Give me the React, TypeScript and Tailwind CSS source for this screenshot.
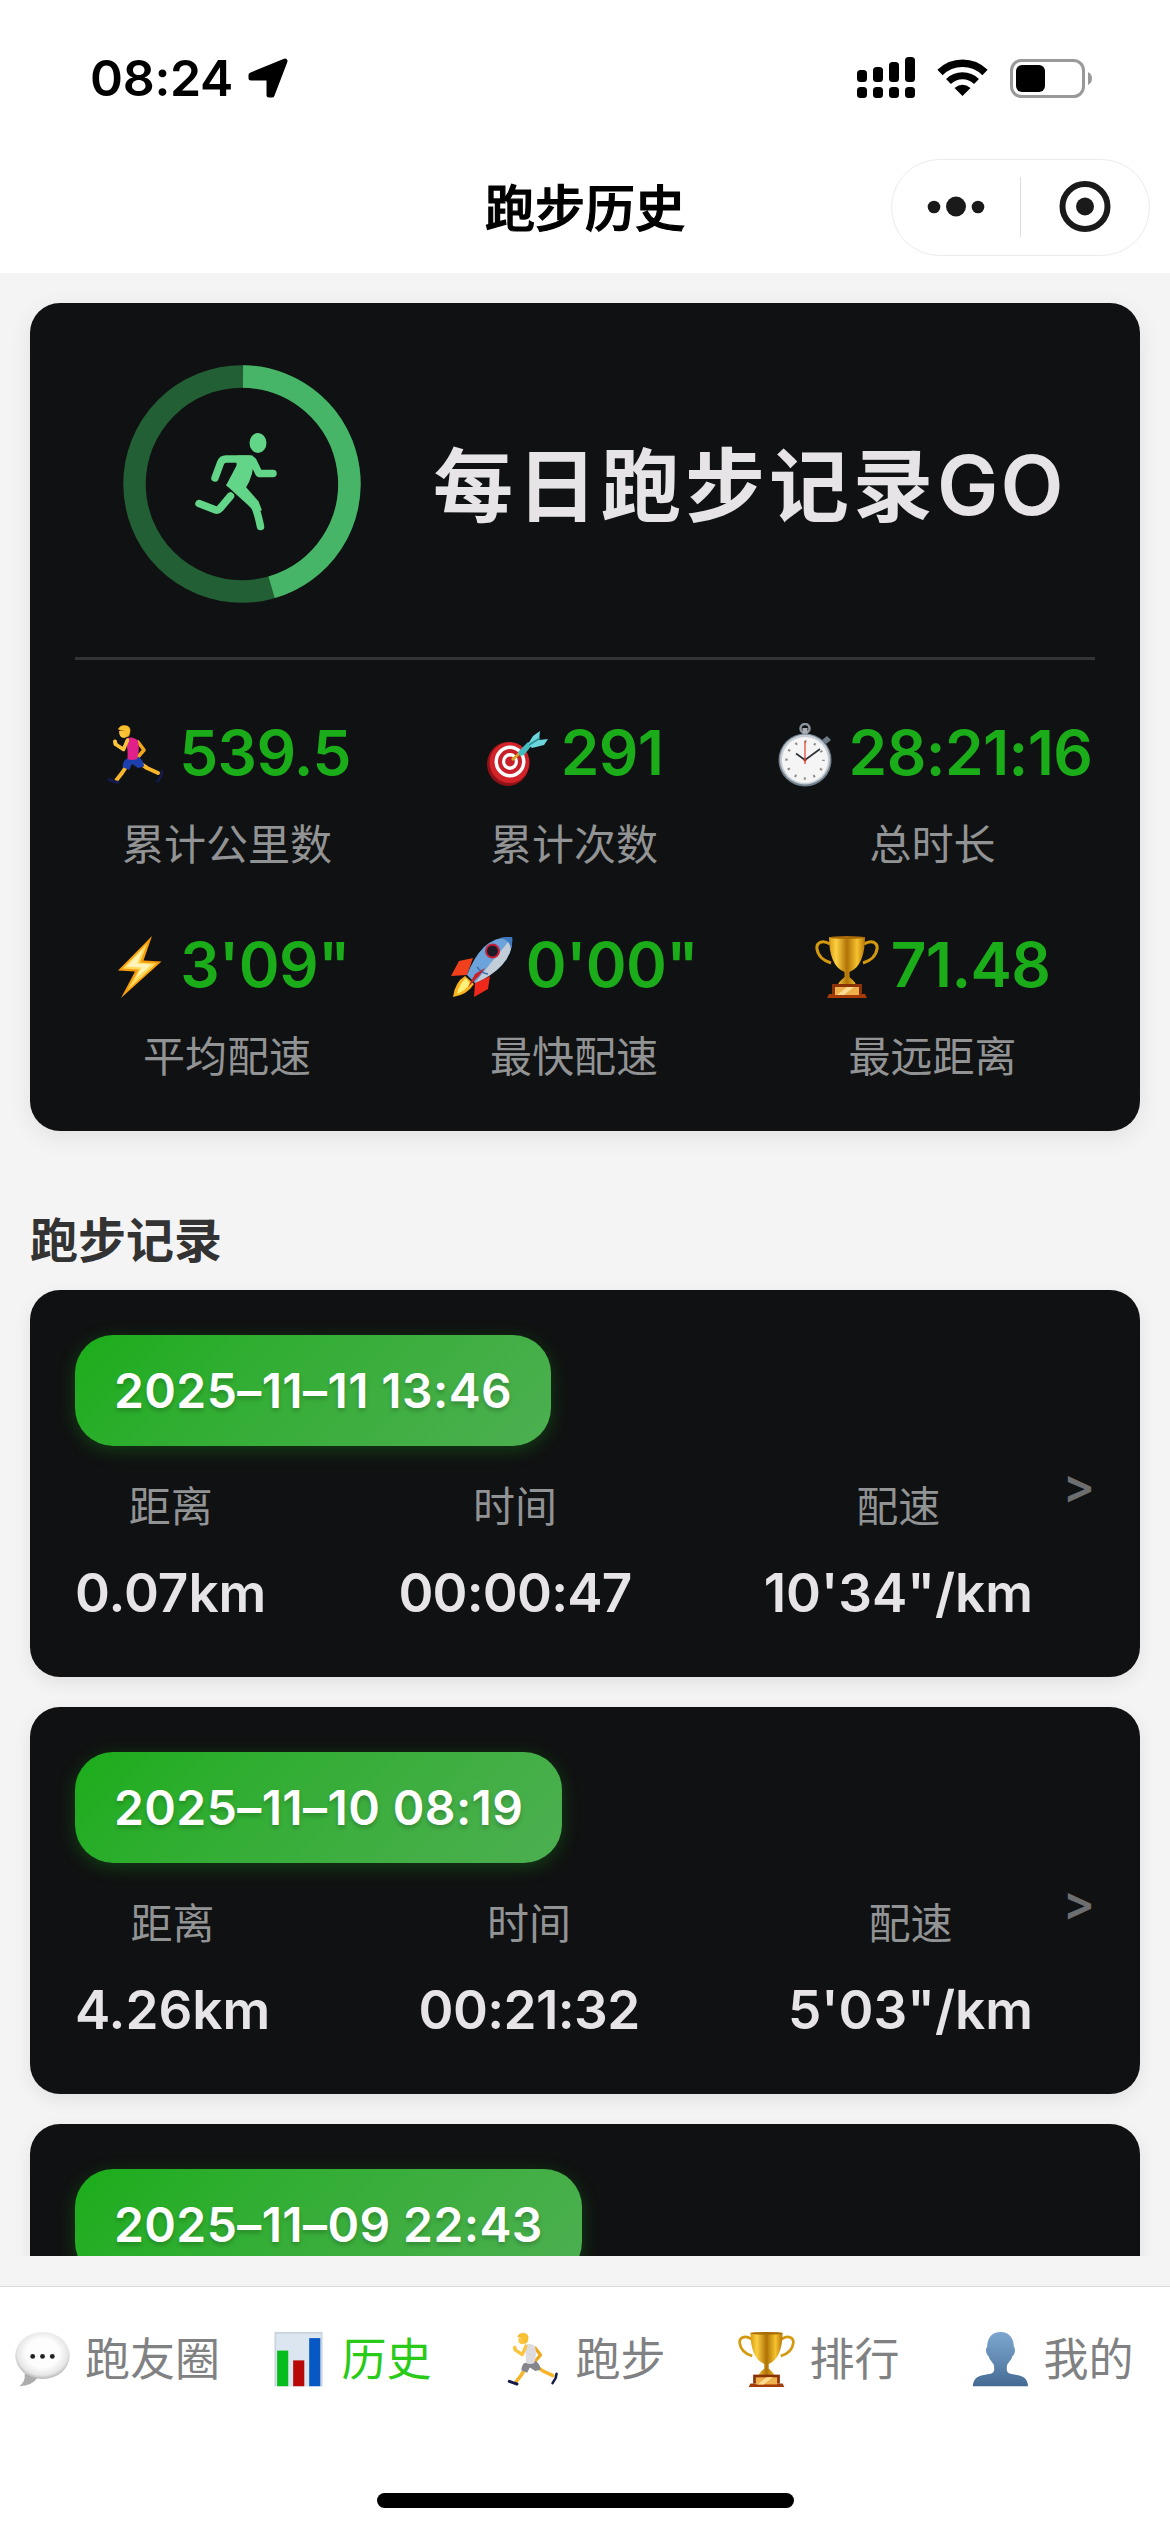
import type { ReactNode } from 'react';

const RunnerEmoji = ({ shirt, shorts, className }: { shirt: string; shorts: string; className: string }) => (
  <svg viewBox="0 0 64 64" className={className} fill="none" strokeLinecap="round" strokeLinejoin="round">
    <path d="M35 19 L41 27 L35 34" stroke="#f0a71c" strokeWidth="3.6" />
    <path d="M37 40 L44 45 L55 50" stroke="#f7b52c" strokeWidth="4" />
    <path d="M25 41 L19 50 L13.5 57" stroke="#f7b52c" strokeWidth="4" />
    <path d="M59 48 L58 53 L54.5 58.5" stroke="#141a4a" strokeWidth="2.8" />
    <path d="M6 56.500 L10 58 L14.500 59.500" stroke="#141a4a" strokeWidth="3.4" />
    <path d="M23 36 L36 34 Q41 38 41 43.500 L35 45 L29 41 L26 47 L19.500 44 Q20 38 23 36 Z" fill={shorts} />
    <path d="M24 15 Q31 13 35 18 Q37 26 34 36 Q29 38 24.500 36 Q25 25 23 20 Z" fill={shirt} />
    <path d="M24.500 17 L20.500 26.500 L13 21.500" stroke="#fcc43a" strokeWidth="3.6" />
    <path d="M12.500 21 L12 18.500" stroke="#fcc43a" strokeWidth="4" />
    <path d="M16 8 Q16 15 21 15 Q26 14 26 8 Z" fill="#fdc53b" />
    <path d="M15.500 6 Q17 2 22 2.500 Q28 3 27 9 Q26.500 13 24.500 14 Q23 9 20 7.500 Q17 8 15.500 6 Z" fill="#f9c02f" stroke="#e9a41b" strokeWidth="0.5" />
  </svg>
);

const DartEmoji = ({ className }: { className: string }) => (
  <svg viewBox="0 0 64 64" className={className}>
    <ellipse cx="23" cy="41" rx="21" ry="22" fill="#8f1216" />
    <ellipse cx="24.500" cy="39.500" rx="20" ry="20.500" fill="#d2232a" />
    <ellipse cx="25" cy="38.500" rx="15.500" ry="16" fill="#fff" />
    <ellipse cx="25" cy="38.500" rx="12" ry="12.500" fill="#c8202a" />
    <ellipse cx="25" cy="38.500" rx="8" ry="8.500" fill="#fff" />
    <ellipse cx="25" cy="38.500" rx="4.800" ry="5" fill="#c8202a" />
    <path d="M27 37 L36 29" stroke="#d9a520" strokeWidth="2.600" />
    <path d="M33 29 L43 19 L47 22 L39 32 L35 33 Z" fill="#45bcc0" />
    <path d="M43 21 L48 13 L55 8 L54 17 L63 16 L59 22 L47 25 Z" fill="#6cd6dc" />
    <path d="M44 22 L55 15" stroke="#2b8f96" strokeWidth="1.500" />
  </svg>
);

const StopwatchEmoji = ({ className }: { className: string }) => (
  <svg viewBox="0 0 64 64" className={className}>
    <circle cx="32" cy="5.500" r="4.500" fill="none" stroke="#8d949c" strokeWidth="2.500" />
    <rect x="29.500" y="5" width="5" height="7" fill="#a9aeb5" />
    <path d="M49 17 L54 13 L58 17 L53 21 Z" fill="#6e7b86" />
    <circle cx="32" cy="37" r="26.500" fill="#73808e" />
    <circle cx="32" cy="36.500" r="25" fill="#c6ccd3" />
    <circle cx="32" cy="37" r="23" fill="#f5f5f5" />
    <circle cx="32" cy="37" r="18.500" fill="none" stroke="#8a8a8a" strokeWidth="2.500" strokeDasharray="2 7.687" strokeDashoffset="1" />
    <path d="M32 41 V18" stroke="#e2483d" strokeWidth="1.300" />
    <path d="M32 37 L23 30.500 M32 37 L47 26" stroke="#2b3136" strokeWidth="1.600" />
    <circle cx="32" cy="37" r="1.500" fill="#c0392b" />
  </svg>
);

const BoltEmoji = ({ className }: { className: string }) => (
  <svg viewBox="0 0 64 64" className={className}>
    <path d="M48 1 L14 35.500 L31 36.500 L17 63 L57.500 26.500 L39.500 25.500 Z" fill="#f59b0c" />
    <path d="M43.500 8 L18.500 33.500 L35 34.500 L23.500 55 L52.500 28.500 L36 27.500 Z" fill="#ffd95c" />
    <path d="M39 14 L22.500 31.500 L38 32.500 L31 44 L47.500 29.500 L33 28.500 Z" fill="#fff3b8" />
  </svg>
);

const RocketEmoji = ({ className }: { className: string }) => (
  <svg viewBox="0 0 64 64" className={className}>
    <path d="M23 23 L9 26 L1 41 L17 40 Z" fill="#f0411c" />
    <path d="M40 41 L38 54 L24 62 L25 48 Z" fill="#f0281c" />
    <path d="M15 41 Q5 47 3 62 Q17 60 24 49 Z" fill="#f9b21d" />
    <path d="M16 43 Q9 49 7 59 Q15 56 20 49 Z" fill="#fff07a" />
    <path d="M62 2 Q46 1 34 12 Q24 22 17 40 L25 48 Q42 41 52 30 Q63 18 62 2 Z" fill="#6ba3da" />
    <path d="M62 2 Q52 15 40 29 L25 48 Q42 41 52 30 Q63 18 62 2 Z" fill="#c3cdd7" />
    <path d="M50 3 Q60 5 61 14 Q63 7 62 2 Q56 1.500 50 3 Z" fill="#3f78bd" />
    <path d="M27 32 Q31 38 38 39" fill="none" stroke="#3c74b2" strokeWidth="1.500" />
    <path d="M35 33 L29 41 L18 52 L25 39 Z" fill="#c91f29" />
    <circle cx="42.500" cy="16" r="7.500" fill="#c9213a" />
    <circle cx="42.500" cy="16" r="5.500" fill="#1d1b26" />
  </svg>
);

const TrophyEmoji = ({ className }: { className: string }) => (
  <svg viewBox="0 0 64 64" className={className}>
    <defs>
      <linearGradient id="cup" x1="0" x2="1" y1="0" y2="0">
        <stop offset="0" stopColor="#d99a0f" />
        <stop offset="0.200" stopColor="#fcd042" />
        <stop offset="0.500" stopColor="#b07206" />
        <stop offset="0.780" stopColor="#f6c22e" />
        <stop offset="1" stopColor="#b57507" />
      </linearGradient>
    </defs>
    <path d="M15 9 C7 4 1 8 2 14 C3 21 9 26 16 28" fill="none" stroke="#d3990f" strokeWidth="3" />
    <path d="M49 9 C57 4 63 8 62 14 C61 21 55 26 48 28" fill="none" stroke="#d3990f" strokeWidth="3" />
    <path d="M14 2 C14 20 19 33 29.500 37 V42 C28 44 24 46 23 50 H41 C40 46 36 44 34.500 42 V37 C45 33 50 20 50 2 Z" fill="url(#cup)" />
    <ellipse cx="32" cy="2.500" rx="18" ry="1.500" fill="#a96b06" />
    <path d="M17 49 H47 V59 H17 Z" fill="#8a3207" />
    <path d="M12 63 L14 59 H50 L52 63 Z" fill="#a53c08" />
    <rect x="20" y="52" width="24" height="8" fill="#eeb04a" />
    <path d="M22 60 L32 52 H39 L29 60 Z" fill="#ffdc92" />
  </svg>
);

const BubbleEmoji = ({ className }: { className: string }) => (
  <svg viewBox="0 0 64 64" className={className}>
    <defs>
      <radialGradient id="bubble" cx="0.5" cy="0.45" r="0.55">
        <stop offset="0.550" stopColor="#fdfdfd" />
        <stop offset="0.850" stopColor="#e6e6e6" />
        <stop offset="1" stopColor="#b4b4b4" />
      </radialGradient>
    </defs>
    <path d="M12 48 Q13 57 6 62 Q20 62 27 52 Z" fill="#adadad" />
    <ellipse cx="32" cy="27.500" rx="30.500" ry="26.500" fill="url(#bubble)" />
    <circle cx="21" cy="28.500" r="2.700" fill="#222" />
    <circle cx="32" cy="28.500" r="2.700" fill="#222" />
    <circle cx="43" cy="28.500" r="2.700" fill="#222" />
  </svg>
);

const ChartEmoji = ({ className }: { className: string }) => (
  <svg viewBox="0 0 64 64" className={className}>
    <rect x="5" y="1" width="54" height="61" fill="#c9d4de" />
    <rect x="7" y="3" width="50" height="59" fill="#dce6f0" />
    <rect x="8" y="22" width="12.500" height="40" fill="#06bd1d" />
    <rect x="26" y="33" width="12.500" height="29" fill="#b80808" />
    <rect x="44" y="8" width="12.500" height="54" fill="#0757c4" />
  </svg>
);

const PersonEmoji = ({ className }: { className: string }) => (
  <svg viewBox="0 0 64 64" className={className}>
    <defs>
      <linearGradient id="person" x1="0" x2="0" y1="0" y2="1">
        <stop offset="0" stopColor="#7da7d0" />
        <stop offset="0.550" stopColor="#6088b0" />
        <stop offset="1" stopColor="#446a94" />
      </linearGradient>
    </defs>
    <path
      d="M32 1 C42 1 47 8 47 18 C49.500 20 48 27 45.500 28 C44 33 41 35 39.500 38 C38.500 44 39 47 43 48 C54 50 62 50 63 62 H1 C2 50 10 50 21 48 C25 47 25.500 44 24.500 38 C23 35 20 33 18.500 28 C16 27 14.500 20 17 18 C17 8 22 1 32 1 Z"
      fill="url(#person)"
    />
  </svg>
);

const StatusBar = () => (
  <div className="flex h-[141px] items-center justify-between pl-[90px] pr-[78px] pt-[15px]">
    <div className="flex items-center gap-[15px]">
      <span className="text-[50px] font-semibold leading-none tracking-[-0.3px]">08:24</span>
      <svg viewBox="0 0 40 40" className="h-10 w-10">
        <path d="M37 3 L24 37 L21 37 L21 20 L3 20 L3 17 Z" fill="#000" stroke="#000" strokeWidth="5" strokeLinejoin="round" />
      </svg>
    </div>
    <div className="flex items-center">
      <svg viewBox="0 0 58 42" className="h-[42px] w-[58px]">
        <rect x="0" y="13" width="10" height="12" rx="3.500" />
        <rect x="16" y="10" width="10" height="15" rx="3.500" />
        <rect x="32" y="5" width="10" height="20" rx="3.500" />
        <rect x="48" y="0" width="10" height="25" rx="3.500" />
        <rect x="0" y="30" width="10" height="11" rx="3.500" />
        <rect x="16" y="30" width="10" height="11" rx="3.500" />
        <rect x="32" y="30" width="10" height="11" rx="3.500" />
        <rect x="48" y="30" width="10" height="11" rx="3.500" />
      </svg>
      <svg viewBox="0 0 51 38" className="ml-[22px] h-[38px] w-[51px]" fill="none" stroke="#000">
        <path d="M3 13.500 A32 32 0 0 1 48 13.500" strokeWidth="7.500" />
        <path d="M11.500 22.500 A20 20 0 0 1 39.500 22.500" strokeWidth="7" />
        <path d="M25.500 37 L17.500 29 Q25.500 22.500 33.500 29 Z" fill="#000" stroke="none" />
      </svg>
      <svg viewBox="0 0 82 39" className="ml-[22px] h-[39px] w-[82px]">
        <rect x="1.500" y="1.500" width="72" height="36" rx="10" fill="none" stroke="#999" strokeWidth="3" />
        <rect x="6" y="6" width="29" height="27" rx="6" />
        <path d="M78 13 Q82 15 82 19.500 Q82 24 78 26 Z" fill="#999" />
      </svg>
    </div>
  </div>
);

const NavBar = () => (
  <div className="grid h-[132px] grid-cols-[1fr_auto_1fr] items-center">
    <span />
    <h1 className="pt-[3px] text-[50px] font-medium leading-none [-webkit-text-stroke:1.2px_black]">跑步历史</h1>
    <div className="mr-5 flex h-[97px] w-[259px] items-center justify-self-end rounded-full border border-[#ebebeb]">
      <svg viewBox="0 0 128 60" className="h-[60px] w-32" fill="#1a1a1a">
        <circle cx="42" cy="30" r="6.300" />
        <circle cx="64" cy="29.500" r="10" />
        <circle cx="86" cy="30" r="6.300" />
      </svg>
      <span className="h-[60px] w-px bg-[#dedede]" />
      <svg viewBox="0 0 128 60" className="h-[60px] w-32" fill="#1a1a1a">
        <circle cx="64" cy="29.500" r="22.500" fill="none" stroke="#1a1a1a" strokeWidth="6" />
        <circle cx="64" cy="29.500" r="9" />
      </svg>
    </div>
  </div>
);

// ring progress: bright part covers 0-164deg, clockwise from the top
const RingLogo = () => (
  <svg viewBox="0 0 240 240" className="h-60 w-60" fill="none">
    <circle cx="120" cy="120" r="107.500" stroke="#235f34" strokeWidth="22.500" />
    <path d="M121 12.500 A107.500 107.500 0 0 1 149.600 223.300" stroke="#47b568" strokeWidth="22.500" />
    <g stroke="#62d588" strokeWidth="7.500" strokeLinecap="round" strokeLinejoin="round">
      <ellipse cx="136" cy="79" rx="8.500" ry="10" fill="#62d588" stroke="none" />
      <path d="M127 95 H104 Q100 95 98.500 99 L93 114" />
      <path d="M131 97 L137 109.500 H151" />
      <path d="M116 93 H130 Q131 110 122 124 L106 121 L116 102 Z" fill="#62d588" strokeWidth="3" />
      <path d="M105 121 L122 122 L136 138 L139 146 L132 146 L127 141 Z" fill="#62d588" strokeWidth="1.500" />
      <path d="M133 143 Q136 150 138.500 162.500" />
      <path d="M108.500 132 L98 144.500 Q96 147 92.500 145.500 L77 139.500" />
    </g>
  </svg>
);

const stats: { icon: ReactNode; value: string; label: string }[] = [
  { icon: <RunnerEmoji shirt="#e0218a" shorts="#1d3fae" className="h-16 w-16" />, value: '539.5', label: '累计公里数' },
  { icon: <DartEmoji className="h-16 w-16" />, value: '291', label: '累计次数' },
  { icon: <StopwatchEmoji className="h-16 w-16" />, value: '28:21:16', label: '总时长' },
  { icon: <BoltEmoji className="h-16 w-16" />, value: '3\'09"', label: '平均配速' },
  { icon: <RocketEmoji className="h-16 w-16" />, value: '0\'00"', label: '最快配速' },
  { icon: <TrophyEmoji className="h-16 w-16" />, value: '71.48', label: '最远距离' },
];

type RunRecord = { date: string; metrics: { label: string; value: string; className?: string }[] };

const records: RunRecord[] = [
  {
    date: '2025–11–11 13:46',
    metrics: [
      { label: '距离', value: '0.07km' },
      { label: '时间', value: '00:00:47', className: 'tracking-[-0.8px]' },
      { label: '配速', value: '10\'34"/km' },
    ],
  },
  {
    date: '2025–11–10 08:19',
    metrics: [
      { label: '距离', value: '4.26km' },
      { label: '时间', value: '00:21:32', className: 'tracking-[-0.6px]' },
      { label: '配速', value: '5\'03"/km' },
    ],
  },
  { date: '2025–11–09 22:43', metrics: [] },
];

const tabs: { icon: ReactNode; label: string; active?: boolean }[] = [
  { icon: <BubbleEmoji className="h-[57px] w-[57px]" />, label: '跑友圈' },
  { icon: <ChartEmoji className="h-[57px] w-[57px]" />, label: '历史', active: true },
  { icon: <RunnerEmoji shirt="#dcdce0" shorts="#85868c" className="h-[57px] w-[57px]" />, label: '跑步' },
  { icon: <TrophyEmoji className="h-[57px] w-[57px]" />, label: '排行' },
  { icon: <PersonEmoji className="h-[57px] w-[57px]" />, label: '我的' },
];

const SummaryCard = () => (
  <section className="h-[828px] shrink-0 rounded-[30px] bg-[#101112] px-[45px] shadow-[0_6px_24px_rgba(0,0,0,0.08)]">
    <div className="flex h-[357px] items-center border-b-[3px] border-[#333435] pl-[47px] pt-2">
      <RingLogo />
      <h2 className="ml-[71px] whitespace-nowrap pt-1 text-[80px] font-bold leading-none tracking-[4px] text-[#e6e4e6]">
        每日跑步记录<span className="text-[82px] font-semibold tracking-[2px]">GO</span>
      </h2>
    </div>
    <div className="mt-14 grid grid-cols-[304px_390px_327px] gap-y-[54px]">
      {stats.map((stat) => (
        <div key={stat.label} className="flex flex-col items-center">
          <div className="flex h-[72px] items-center gap-3 pt-px">
            <span className="mt-1">{stat.icon}</span>
            <span className="whitespace-nowrap text-[62px] font-semibold leading-none tracking-[-0.6px] text-[#1aad19]">{stat.value}</span>
          </div>
          <span className="mt-[27px] text-[42px] leading-[59px] text-[#929394]">{stat.label}</span>
        </div>
      ))}
    </div>
  </section>
);

const RecordCard = ({ record }: { record: RunRecord }) => (
  <article className="flex h-[387px] shrink-0 items-start justify-between rounded-[30px] bg-[#101112] px-[45px] pt-[45px] shadow-[0_6px_18px_rgba(0,0,0,0.08)]">
    <div className="flex w-[958px] flex-col items-start">
      <div className="flex h-[111px] items-center rounded-[38px] bg-linear-135 from-[#1aad19] to-[#4caf50] px-[39px] shadow-[0_4px_18px_rgba(26,173,25,0.3)]">
        <span className="whitespace-nowrap text-[48px] font-semibold leading-none tracking-[0.4px] text-white [text-shadow:0_3px_4px_rgba(0,0,0,0.2)]">
          {record.date}
        </span>
      </div>
      <div className="mt-[31px] flex w-full justify-between">
        {record.metrics.map((metric) => (
          <div key={metric.label} className="flex flex-col items-center">
            <span className="text-[42px] leading-[60px] text-[#929394]">{metric.label}</span>
            <span className={`mt-6 whitespace-nowrap text-[53px] font-semibold leading-[64px] text-[#e6e4e6] ${metric.className ?? ''}`}>
              {metric.value}
            </span>
          </div>
        ))}
      </div>
    </div>
    {record.metrics.length > 0 && (
      <span className="mt-[127px] text-[48px] font-semibold leading-none text-[#6d6e6f]">&gt;</span>
    )}
  </article>
);

const TabBar = () => (
  <nav className="h-[246px] border-t border-[#dcdcdc] bg-white">
    <div className="grid h-[145px] grid-cols-5">
      {tabs.map((tab) => (
        <div key={tab.label} className="flex items-center justify-center gap-3.5">
          {tab.icon}
          <span className={`text-[45px] leading-none ${tab.active ? 'text-[#2aca19]' : 'text-[#7f8183]'}`}>{tab.label}</span>
        </div>
      ))}
    </div>
    <div className="mx-auto mt-[61px] h-[15px] w-[417px] rounded-full bg-black" />
  </nav>
);

const App = () => {
  return (
    <div className="flex h-[2532px] w-[1170px] flex-col overflow-hidden bg-[#f4f4f4] font-['Inter','Noto_Sans_CJK_SC',sans-serif] text-black">
      <header className="h-[273px] shrink-0 bg-white">
        <StatusBar />
        <NavBar />
      </header>
      <main className="flex h-[1983px] shrink-0 flex-col overflow-hidden px-[30px] pt-[30px]">
        <SummaryCard />
        <h3 className="mt-20 shrink-0 text-[48px] font-bold leading-[60px] text-[#333]">跑步记录</h3>
        <div className="mt-[19px] flex flex-col gap-[30px]">
          {records.map((record) => (
            <RecordCard key={record.date} record={record} />
          ))}
        </div>
      </main>
      <div className="h-[30px] shrink-0" />
      <TabBar />
    </div>
  );
};

export default App;
